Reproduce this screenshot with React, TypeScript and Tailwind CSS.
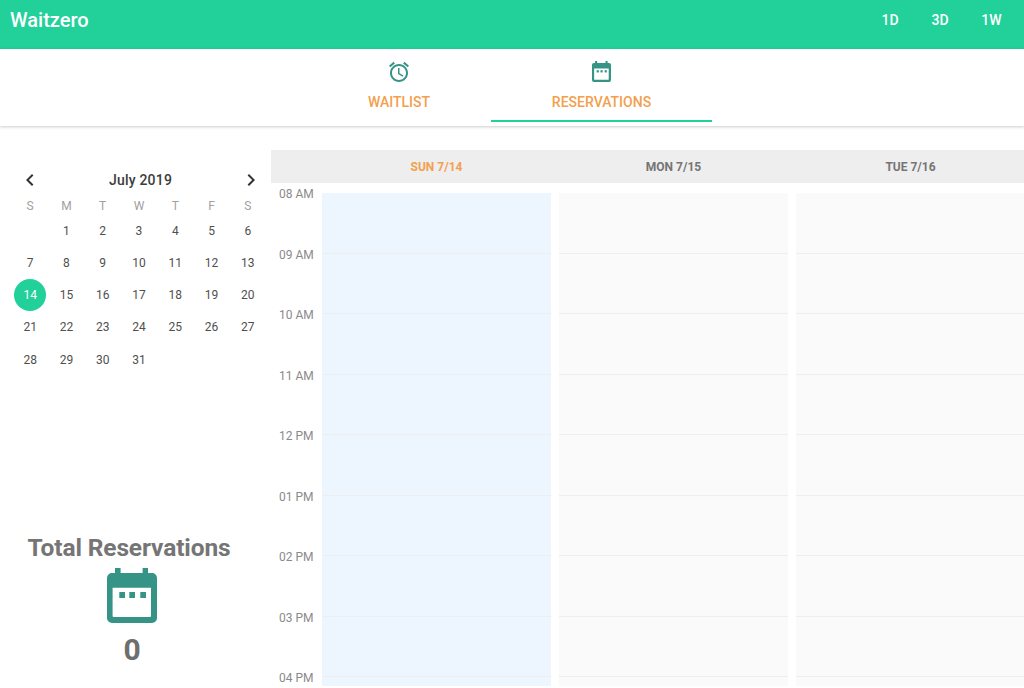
const DAYS = ["S", "M", "T", "W", "T", "F", "S"];
const DATES: (number | null)[] = [null, ...Array.from({ length: 31 }, (_, i) => i + 1)];
const HOURS = ["08 AM", "09 AM", "10 AM", "11 AM", "12 PM", "01 PM", "02 PM", "03 PM", "04 PM"];
const COLUMNS = [
  { label: "SUN 7/14", today: true },
  { label: "MON 7/15", today: false },
  { label: "TUE 7/16", today: false },
];

function AlarmIcon({ className }: { className?: string }) {
  return (
    <svg className={className} viewBox="0 0 24 24" fill="currentColor">
      <path d="M22 5.72l-4.6-3.86-1.29 1.53 4.6 3.86L22 5.72zM7.88 3.39L6.6 1.86 2 5.71l1.29 1.53 4.59-3.85zM12.5 8H11v6l4.75 2.85.75-1.23-4-2.37V8zM12 4c-4.97 0-9 4.03-9 9s4.02 9 9 9c4.97 0 9-4.03 9-9s-4.03-9-9-9zm0 16c-3.87 0-7-3.13-7-7s3.13-7 7-7 7 3.13 7 7-3.13 7-7 7z" />
    </svg>
  );
}

function CalendarIcon({ className }: { className?: string }) {
  return (
    <svg className={className} viewBox="0 0 50 55" fill="currentColor">
      <path
        fillRule="evenodd"
        d="M8 0h5.6v5h22V0H41v5h4a5 5 0 0 1 5 5v40a5 5 0 0 1-5 5H5a5 5 0 0 1-5-5V10a5 5 0 0 1 5-5h3V0zM5.6 19.7V48a1 1 0 0 0 1 1H43a1 1 0 0 0 1-1V19.7H5.6z"
      />
      <rect x="12.3" y="24" width="5.7" height="6" />
      <rect x="22.3" y="24" width="5.7" height="6" />
      <rect x="33.3" y="24" width="5.7" height="6" />
    </svg>
  );
}

function Chevron({ flip }: { flip?: boolean }) {
  return (
    <svg className={`h-6 w-6 text-[#333] ${flip ? "rotate-180" : ""}`} viewBox="0 0 24 24" fill="currentColor">
      <path d="M15.41 7.41L14 6l-6 6 6 6 1.41-1.41L10.83 12z" />
    </svg>
  );
}

function MiniCalendar() {
  return (
    <div className="w-[254px] ml-3">
      <div className="flex items-center justify-between h-6 pl-[6px] pr-[3px]">
        <Chevron />
        <span className="text-sm font-medium text-[#3c3c3c] tracking-[0.2px]">July 2019</span>
        <Chevron flip />
      </div>
      <div className="grid grid-cols-7 mt-[5px] h-[17.5px] items-center text-center text-xs text-[#a0a0a0]">
        {DAYS.map((d, i) => (
          <span key={i}>{d}</span>
        ))}
      </div>
      <div className="grid grid-cols-7 auto-rows-[32.25px]">
        {DATES.map((d, i) => (
          <div key={i} className="flex items-center justify-center">
            {d === 14 ? (
              <span className="h-8 w-8 rounded-full bg-[#22d09a] text-white text-xs flex items-center justify-center">
                {d}
              </span>
            ) : (
              <span className="text-xs text-[#4f4f4f]">{d}</span>
            )}
          </div>
        ))}
      </div>
    </div>
  );
}

export default function App() {
  return (
    <div className="h-[688px] w-[1024px] overflow-hidden bg-white flex flex-col antialiased font-['Roboto',sans-serif]">
      {/* App bar */}
      <header className="h-[49px] shrink-0 bg-[#22d09a] flex items-center justify-between text-white">
        <span className="pl-[10px] pb-[9px] text-[20px] leading-7 font-medium">Waitzero</span>
        <div className="flex items-center pb-[9px] pr-[5px] text-sm font-medium">
          <span className="w-[50px] text-center">1D</span>
          <span className="w-[50px] text-center">3D</span>
          <span className="w-[54px] pr-[1px] text-center">1W</span>
        </div>
      </header>

      {/* Tabs */}
      <nav className="h-[77px] shrink-0 bg-white flex justify-center pr-[5px] shadow-[0_1px_3px_rgba(0,0,0,0.2)] relative z-10">
        <div className="w-[184px] flex flex-col items-center pt-[11px]">
          <AlarmIcon className="h-6 w-6 text-[#359485]" />
          <span className="mt-[8px] text-sm font-medium text-[#f2a04e]">WAITLIST</span>
        </div>
        <div className="w-[221px] flex flex-col items-center pt-[11px] h-[73px] border-b-2 border-[#22d09a]">
          <CalendarIcon className="h-[21px] w-[19px] mt-[1px] text-[#359485]" />
          <span className="mt-[10px] text-sm font-medium text-[#f2a04e]">RESERVATIONS</span>
        </div>
      </nav>

      <main className="flex-1 min-h-0 flex">
        {/* Sidebar */}
        <aside className="w-[271px] shrink-0 flex flex-col justify-between pt-[42px]">
          <MiniCalendar />
          <div className="flex flex-col items-center w-[258px] pb-[20px]">
            <span className="text-[24.5px] font-bold text-[#757575] leading-7 tracking-[-0.12px]">Total Reservations</span>
            <CalendarIcon className="mt-[6px] ml-[6px] h-[55px] w-[50px] text-[#359485]" />
            <span className="mt-[9px] ml-[6px] text-[30px] leading-9 font-bold text-[#6e6e6e]">0</span>
          </div>
        </aside>

        {/* Schedule */}
        <section className="flex-1 min-w-0 pt-6 mb-[2px] overflow-hidden">
          <div className="h-[33px] bg-[#eeeeee] flex pl-[47px]">
            {COLUMNS.map((c) => (
              <div
                key={c.label}
                className={`w-[237px] shrink-0 flex items-center justify-center text-xs font-bold ${c.today ? "text-[#f2a04e]" : "text-[#757575]"}`}
              >
                {c.label}
              </div>
            ))}
          </div>
          <div className="flex mt-[10px] w-[758px]">
            <div className="w-[47px] shrink-0 flex flex-col">
              {HOURS.map((h) => (
                <span key={h} className="h-[60.5px] shrink-0 pl-2 -mt-[1px] mb-[1px] text-xs leading-[4px] text-[#8a8a8a]">
                  {h}
                </span>
              ))}
            </div>
            {COLUMNS.map((c) => (
              <div
                key={c.label}
                className={`w-[229px] shrink-0 mx-1 flex flex-col ${c.today ? "bg-[#edf5fe]" : "bg-[#fafafa]"}`}
              >
                {HOURS.map((h) => (
                  <div key={h} className="h-[60.5px] shrink-0 border-b border-[#eeeeee]" />
                ))}
              </div>
            ))}
          </div>
        </section>
      </main>
    </div>
  );
}
